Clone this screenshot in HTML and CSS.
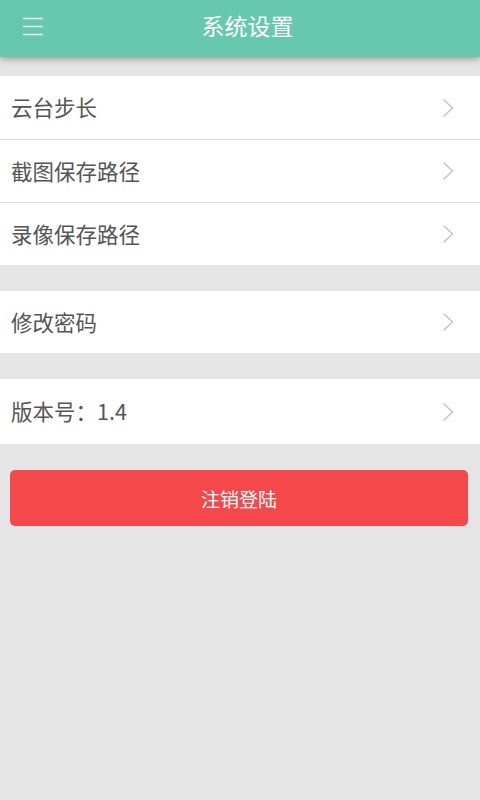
FILE: index.html
```html
<!DOCTYPE html>
<html>
<head>
	<meta charset="utf-8">
	<title>系统设置</title>
	<link rel="stylesheet" href="styles.css">
</head>
<body>
	<div class="topbar">
		<div class="menu">
			<svg width="20" height="20" viewBox="0 0 20 20">
				<path d="M0 2.5h20M0 10.5h20M0 18.5h20" stroke="#e8f6f1" stroke-width="1.6" fill="none"/>
			</svg>
		</div>
		<div class="title">系统设置</div>
	</div>

	<div class="group first">
		<div class="row">
			<span>云台步长</span>
			<svg class="arrow" width="12" height="20" viewBox="0 0 12 20"><path d="M1.5 1.5L10.5 10L1.5 18.5" stroke="#c2c2c2" stroke-width="1.4" fill="none"/></svg>
		</div>
		<div class="row">
			<span>截图保存路径</span>
			<svg class="arrow" width="12" height="20" viewBox="0 0 12 20"><path d="M1.5 1.5L10.5 10L1.5 18.5" stroke="#c2c2c2" stroke-width="1.4" fill="none"/></svg>
		</div>
		<div class="row">
			<span>录像保存路径</span>
			<svg class="arrow" width="12" height="20" viewBox="0 0 12 20"><path d="M1.5 1.5L10.5 10L1.5 18.5" stroke="#c2c2c2" stroke-width="1.4" fill="none"/></svg>
		</div>
	</div>

	<div class="group">
		<div class="row short">
			<span>修改密码</span>
			<svg class="arrow" width="12" height="20" viewBox="0 0 12 20"><path d="M1.5 1.5L10.5 10L1.5 18.5" stroke="#c2c2c2" stroke-width="1.4" fill="none"/></svg>
		</div>
	</div>

	<div class="group">
		<div class="row tall">
			<span>版本号：1.4</span>
			<svg class="arrow" width="12" height="20" viewBox="0 0 12 20"><path d="M1.5 1.5L10.5 10L1.5 18.5" stroke="#c2c2c2" stroke-width="1.4" fill="none"/></svg>
		</div>
	</div>

	<div class="logout">注销登陆</div>
</body>
</html>
```

FILE: styles.css
```css
html {
	background: #e5e5e5;
}
body {
	margin: 0;
	font-family: "Noto Sans CJK SC", "Noto Sans", sans-serif;
}
.topbar {
	height: 57px;
	background: #66c8ac;
	display: flex;
	align-items: center;
	box-shadow: 0 2px 7px rgba(0, 0, 0, 0.35);
	position: relative;
}
.menu {
	width: 20px;
	height: 20px;
	margin-left: 23px;
	margin-top: -6px;
}
.menu svg {
	display: block;
}
.title {
	flex: 1;
	text-align: center;
	color: #fff;
	font-size: 23px;
	margin-right: 28px;
	margin-top: -8px;
}
.group {
	background: #fff;
	margin-top: 26px;
}
.group.first {
	margin-top: 19px;
}
.row {
	box-sizing: border-box;
	height: 63px;
	display: flex;
	align-items: center;
	justify-content: space-between;
	padding: 0 26px 0 11px;
	border-top: 1px solid #dcdcdc;
	color: #555;
	font-size: 21.5px;
}
.row:first-child {
	border-top: none;
}
.row.short {
	height: 62px;
}
.row.tall {
	height: 65px;
}
.row span {
	margin-top: -2px;
}
.arrow {
	display: block;
}
.logout {
	margin: 26px 12px 0 10px;
	height: 56px;
	background: #f5484a;
	border-radius: 5px;
	color: #fff;
	font-size: 19px;
	display: flex;
	align-items: center;
	justify-content: center;
}
```
